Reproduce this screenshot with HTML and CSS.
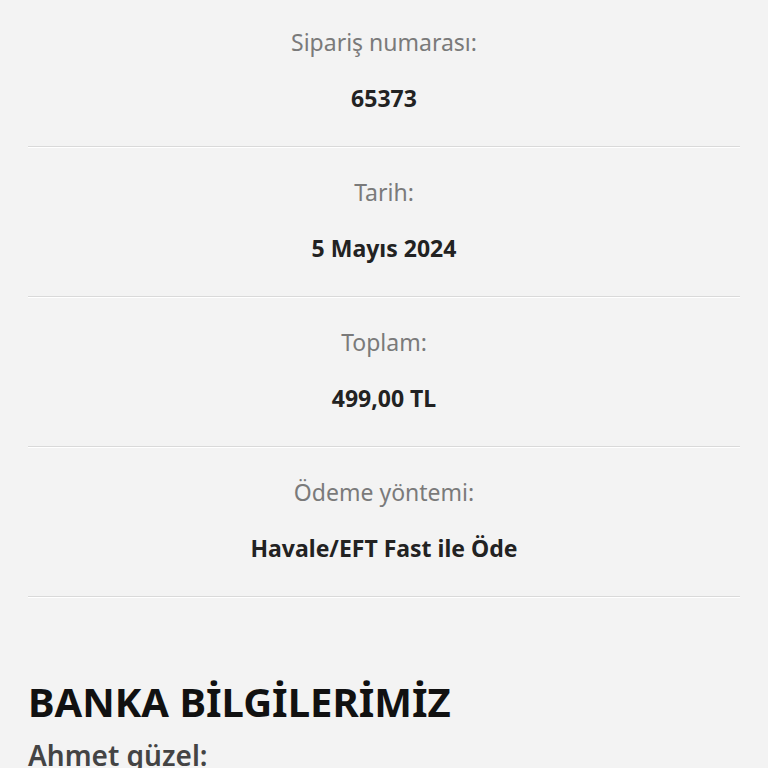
FILE: index.html
```html
<!DOCTYPE html>
<html lang="tr">
<head>
<meta charset="utf-8">
<link rel="stylesheet" href="styles.css">
</head>
<body>
<main class="page">
  <ul class="details">
    <li class="row"><div class="label">Sipariş numarası:</div><div class="value">65373</div></li>
    <li class="row"><div class="label">Tarih:</div><div class="value">5 Mayıs 2024</div></li>
    <li class="row"><div class="label">Toplam:</div><div class="value">499,00 TL</div></li>
    <li class="row"><div class="label">Ödeme yöntemi:</div><div class="value">Havale/EFT Fast ile Öde</div></li>
  </ul>
  <h2 class="title">BANKA BİLGİLERİMİZ</h2>
  <h3 class="subtitle">Ahmet güzel:</h3>
</main>
</body>
</html>
```
FILE: styles.css
```css
html, body {
  margin: 0;
  padding: 0;
  background: #f3f3f3;
  font-family: "Noto Sans", "Open Sans", sans-serif;
}
.page {
  padding: 0 28px;
  overflow: hidden;
  height: 768px;
}
.details {
  list-style: none;
  margin: -2px 0 0;
  padding: 0;
}
.row {
  height: 149px;
  box-sizing: border-box;
  border-bottom: 1px solid #d9d9d9;
  box-shadow: 0 1px 0 #ffffff;
  margin-bottom: 1px;
  text-align: center;
  display: flex;
  flex-direction: column;
  align-items: center;
}
.label {
  margin-top: 29px;
  font-size: 23px;
  line-height: 30px;
  color: #7a7a7a;
  font-weight: 400;
}
.value {
  margin-top: 26px;
  font-size: 23px;
  line-height: 30px;
  color: #222;
  font-weight: 700;
}
.title {
  margin: 81px 0 0;
  font-size: 40px;
  line-height: 48px;
  font-weight: 700;
  color: #111;
}
.subtitle {
  margin: 12px 0 0;
  font-size: 28px;
  line-height: 34px;
  font-weight: 600;
  color: #444;
  white-space: nowrap;
}
```
